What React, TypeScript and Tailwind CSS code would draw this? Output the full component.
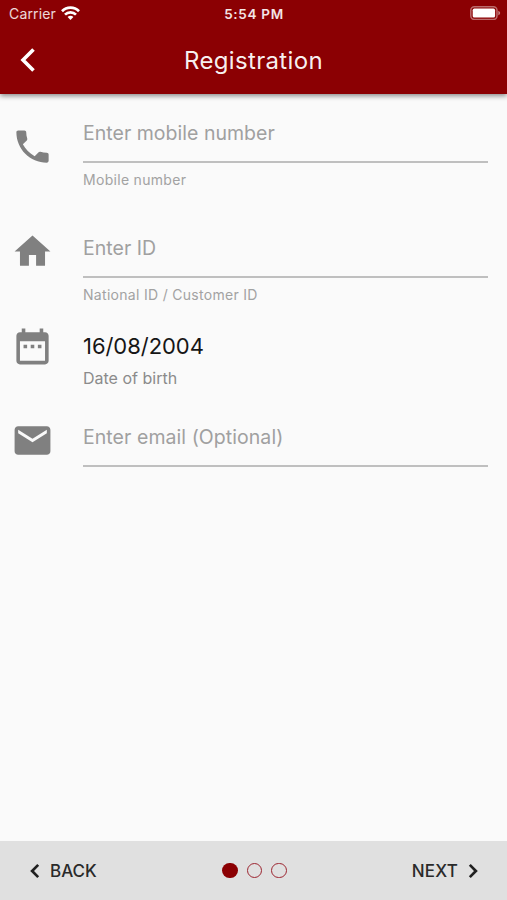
import type { ReactNode } from 'react'

const ICONS = {
  phone:
    'M6.62 10.79c1.44 2.83 3.76 5.14 6.59 6.59l2.2-2.2c.27-.27.67-.36 1.02-.24 1.12.37 2.33.57 3.57.57.55 0 1 .45 1 1V20c0 .55-.45 1-1 1-9.39 0-17-7.61-17-17 0-.55.45-1 1-1h3.5c.55 0 1 .45 1 1 0 1.25.2 2.45.57 3.57.11.35.03.74-.25 1.02l-2.2 2.2z',
  home: 'M10 20v-6h4v6h5v-8h3L12 3 2 12h3v8z',
  calendar:
    'M9 11H7v2h2v-2zm4 0h-2v2h2v-2zm4 0h-2v2h2v-2zm2-7h-1V2h-2v2H8V2H6v2H5c-1.11 0-1.99.9-1.99 2L3 20c0 1.1.89 2 2 2h14c1.1 0 2-.9 2-2V6c0-1.1-.9-2-2-2zm0 16H5V9h14v11z',
  mail: 'M20 4H4c-1.1 0-1.99.9-1.99 2L2 18c0 1.1.9 2 2 2h16c1.1 0 2-.9 2-2V6c0-1.1-.9-2-2-2zm0 4l-8 5-8-5V6l8 5 8-5v2z',
}

function FieldIcon({ name }: { name: keyof typeof ICONS }) {
  return (
    <svg viewBox="0 0 24 24" className="ml-[0.5px] h-[43px] w-[43px] shrink-0 fill-[#808080]">
      <path d={ICONS[name]} />
    </svg>
  )
}

interface FieldProps {
  icon: keyof typeof ICONS
  className: string
  iconClassName: string
  bodyClassName: string
  children: ReactNode
}

function Field({ icon, className, iconClassName, bodyClassName, children }: FieldProps) {
  return (
    <div className={`flex pl-2.5 pr-[19.5px] ${className}`}>
      <div className={`w-[73px] shrink-0 ${iconClassName}`}>
        <FieldIcon name={icon} />
      </div>
      <div className={`flex-1 whitespace-nowrap ${bodyClassName}`}>{children}</div>
    </div>
  )
}

function StatusBar() {
  return (
    <div className="flex h-[27px] items-center justify-between pl-[9px] pr-2 text-white">
      <div className="flex w-[120px] items-center gap-[5.5px]">
        <span className="text-[14px] tracking-[0.15px] text-white/85">Carrier</span>
        <svg viewBox="0 0 19 14" className="-mt-0.5 h-[14px] w-[19px]" fill="none" stroke="white" strokeWidth="2.7">
          <path d="M1 5.2a12 12 0 0 1 17 0" />
          <path d="M4 8.6a7.8 7.8 0 0 1 11 0" />
          <path d="M9.5 13.9l-2.9-2.9a4 4 0 0 1 5.8 0z" fill="white" stroke="none" />
        </svg>
      </div>
      <span className="pt-px text-[13.5px] font-semibold tracking-[0.7px] text-white/90">5:54 PM</span>
      <div className="flex w-[120px] justify-end">
        <svg viewBox="0 0 31 14" className="-mr-[2px] -mt-px h-[14px] w-[31px]">
          <rect x="0.8" y="0.8" width="26.2" height="12.6" rx="3.6" fill="none" stroke="white" strokeOpacity="0.42" strokeWidth="1.5" />
          <rect x="2.7" y="2.6" width="22.4" height="9" rx="1.6" fill="white" />
          <path d="M28.3 4.7c2.4.8 2.4 3.7 0 4.6z" fill="white" fillOpacity="0.5" />
        </svg>
      </div>
    </div>
  )
}

export default function App() {
  return (
    <div className="flex h-[900px] w-[507px] flex-col overflow-hidden bg-[#fafafa] font-['Inter',sans-serif]">
      <header className="relative h-[94px] shrink-0 bg-[#8b0003] shadow-[0_2px_5px_rgba(0,0,0,0.45)]">
        <StatusBar />
        <div className="flex h-[66px] items-center justify-between px-5">
          <button className="flex w-12" aria-label="Back">
            <svg viewBox="0 0 16 26" className="h-[26px] w-4" fill="none" stroke="white" strokeWidth="3.6">
              <path d="M13.5 2.4L3 13l10.5 10.6" />
            </svg>
          </button>
          <h1 className="pt-px text-[24px] tracking-[0.33px] text-white/95">Registration</h1>
          <div className="w-12" />
        </div>
      </header>

      <main className="flex-1">
        <Field icon="phone" className="h-[115px]" iconClassName="pt-[31px]" bodyClassName="pt-[27px]">
          <div className="h-[42px] border-b-2 border-[#bfbfbf] text-[19.5px] leading-6 tracking-[0.02px] text-[#a0a0a0]">Enter mobile number</div>
          <div className="mt-2 text-[14px] leading-[18px] tracking-[0.3px] text-[#a2a2a2]">Mobile number</div>
        </Field>
        <Field icon="home" className="h-[115px]" iconClassName="pt-[21px]" bodyClassName="pt-[27px]">
          <div className="h-[42px] border-b-2 border-[#bfbfbf] text-[19.5px] leading-6 tracking-[0.02px] text-[#a0a0a0]">Enter ID</div>
          <div className="mt-2 text-[14px] leading-[18px] tracking-[0.3px] text-[#a2a2a2]">National ID / Customer ID</div>
        </Field>
        <Field icon="calendar" className="h-[81px]" iconClassName="pt-[0.5px]" bodyClassName="pt-2">
          <div className="text-[22px] leading-7 tracking-[-0.05px] text-[#161616]">16/08/2004</div>
          <div className="mt-2 text-[16px] leading-5 text-[#8b8b8b]">Date of birth</div>
        </Field>
        <Field icon="mail" className="h-[81px]" iconClassName="pt-[14px]" bodyClassName="pt-5">
          <div className="h-[42px] border-b-2 border-[#bfbfbf] text-[19.5px] leading-6 tracking-[0.06px] text-[#a0a0a0]">Enter email (Optional)</div>
        </Field>
      </main>

      <footer className="flex h-[59px] shrink-0 items-center justify-between bg-[#e0e0e0] pl-[30px] pr-[29px] text-[17px] font-medium text-[#2a2a2a]">
        <button className="flex w-[100px] items-center gap-2.5">
          <svg viewBox="0 0 10 16" className="h-4 w-2.5" fill="none" stroke="#202020" strokeWidth="2.7">
            <path d="M8.2 1.9L2.1 8l6.1 6.1" />
          </svg>
          <span className="pt-0.5">BACK</span>
        </button>
        <div className="flex gap-[9px] pl-px">
          <span className="h-[15.5px] w-[15.5px] rounded-full bg-[#8b0003]" />
          <span className="h-[15.5px] w-[15.5px] rounded-full border-[1.5px] border-[#9c2530]" />
          <span className="h-[15.5px] w-[15.5px] rounded-full border-[1.5px] border-[#9c2530]" />
        </div>
        <button className="flex w-[100px] items-center justify-end gap-2.5">
          <span className="pt-0.5 tracking-[0.2px]">NEXT</span>
          <svg viewBox="0 0 10 16" className="h-4 w-2.5" fill="none" stroke="#202020" strokeWidth="2.7">
            <path d="M1.8 1.9L7.9 8l-6.1 6.1" />
          </svg>
        </button>
      </footer>
    </div>
  )
}
